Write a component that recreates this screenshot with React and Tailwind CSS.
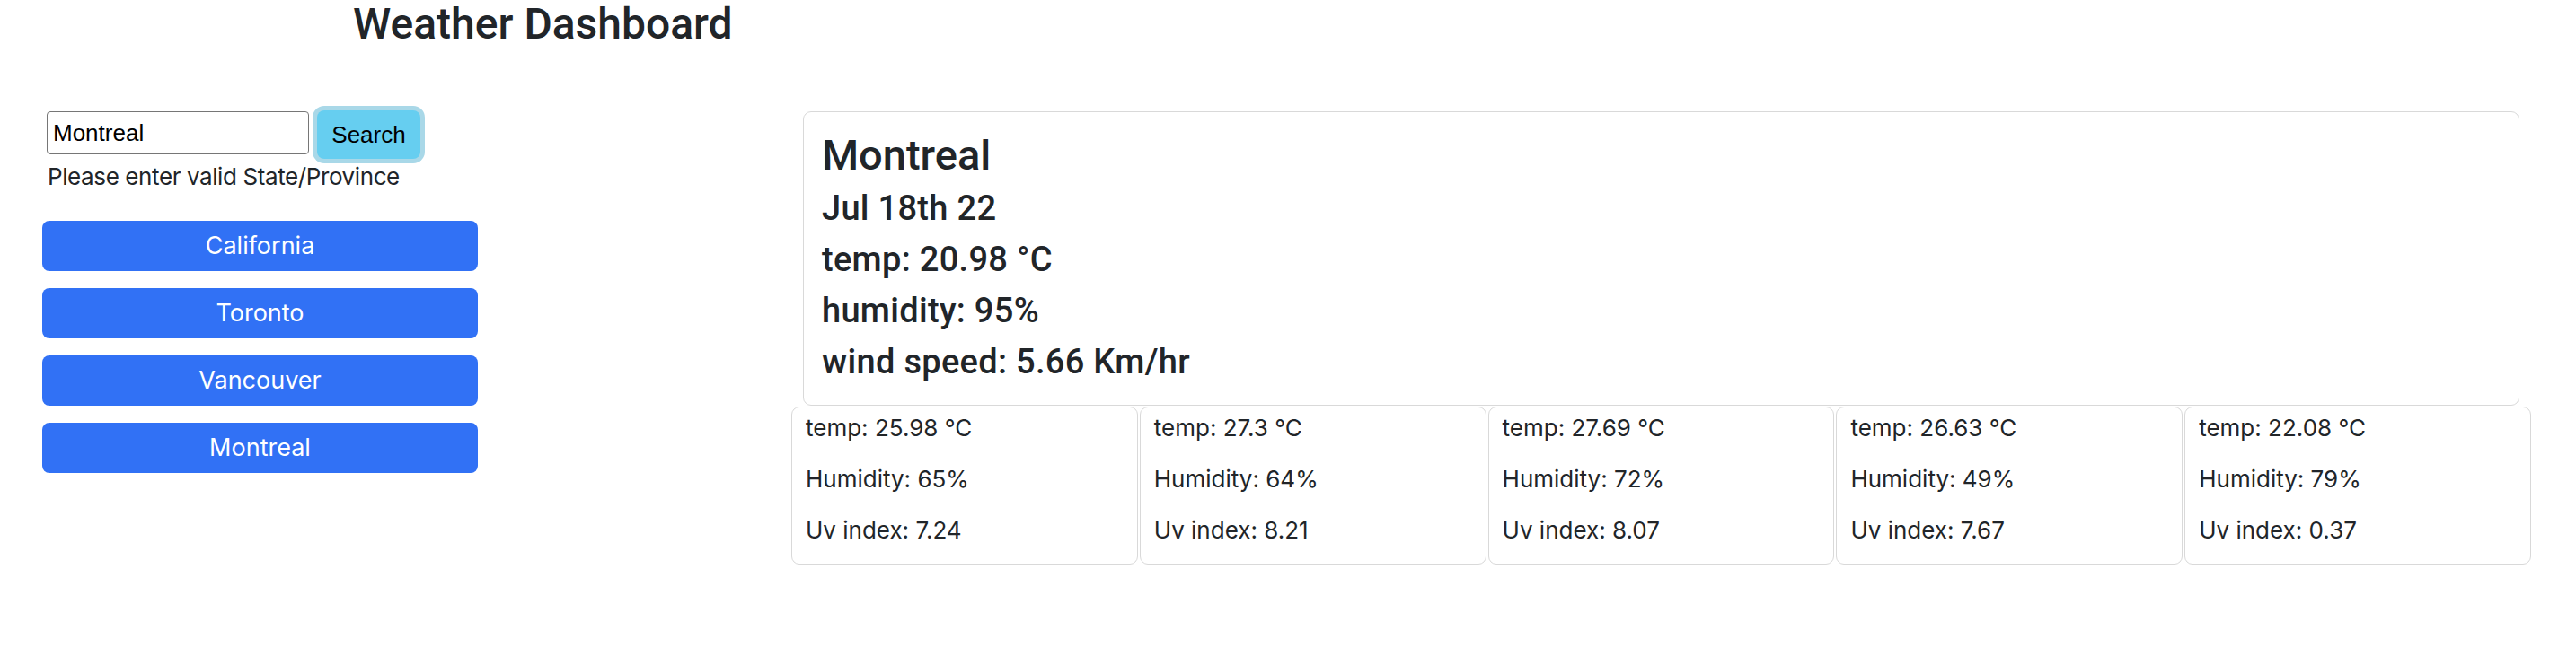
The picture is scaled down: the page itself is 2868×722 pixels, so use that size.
const cities = ["California", "Toronto", "Vancouver", "Montreal"];

const forecast = [
  { temp: "25.98", humidity: 65, uv: "7.24" },
  { temp: "27.3", humidity: 64, uv: "8.21" },
  { temp: "27.69", humidity: 72, uv: "8.07" },
  { temp: "26.63", humidity: 49, uv: "7.67" },
  { temp: "22.08", humidity: 79, uv: "0.37" },
];

export default function App() {
  return (
    <div className="min-h-[722px] bg-white font-['Inter',sans-serif] text-[#212529]">
      <h1 className="pl-[393px] text-[48px] leading-[54px] font-medium font-['Roboto',sans-serif]">
        Weather Dashboard
      </h1>

      <div className="flex">
        {/* Search + saved cities */}
        <aside className="w-[881px] shrink-0 pl-[47px]">
          <div className="flex items-start gap-[9px] pl-[5px] mt-[69px]">
            <input
              type="text"
              defaultValue="Montreal"
              className="mt-[1px] w-[292px] h-[48px] px-[6px] border border-[#767676] rounded-[4px] text-[26px] text-black font-['Liberation_Sans',sans-serif] outline-none"
            />
            <button className="w-[115px] h-[54px] rounded-[8px] bg-[#66cef0] shadow-[0_0_0_5px_#a9d8e8] text-[26px] text-black font-['Liberation_Sans',sans-serif]">
              Search
            </button>
          </div>
          <p className="pl-[6px] text-[26px] leading-[40px] tracking-[-0.4px]">
            Please enter valid State/Province
          </p>

          <div className="mt-[29px] flex flex-col gap-[19px] w-[485px]">
            {cities.map((city) => (
              <button
                key={city}
                className="h-[56px] rounded-[8px] bg-[#3171f5] text-white text-[27px]"
              >
                {city}
              </button>
            ))}
          </div>
        </aside>

        {/* Current weather + 5 day forecast */}
        <main className="w-[1937px] shrink-0 mt-[70px]">
          <div className="mx-[13px] border border-[#d9d9d9] rounded-[9px] pt-[21px] pb-[19px] pl-[20px] font-medium font-['Roboto',sans-serif]">
            <h2 className="text-[47px] leading-[54px] mb-[4px]">Montreal</h2>
            <h3 className="text-[38px] leading-[57px] tracking-[0.3px]">Jul 18th 22</h3>
            <h3 className="text-[38px] leading-[57px] tracking-[0.3px]">temp: 20.98 °C</h3>
            <h3 className="text-[38px] leading-[57px] tracking-[0.3px]">humidity: 95%</h3>
            <h3 className="text-[38px] leading-[57px] tracking-[0.3px]">wind speed: 5.66 Km/hr</h3>
          </div>

          <div className="grid grid-cols-5 gap-[2px] mt-[1px]">
            {forecast.map((day, i) => (
              <div
                key={i}
                className="h-[176px] border border-[#d9d9d9] rounded-[9px] pt-[3px] pl-[15px] text-[26px] leading-[39px]"
              >
                <p className="mb-[18px]">temp: {day.temp} °C</p>
                <p className="mb-[18px]">Humidity: {day.humidity}%</p>
                <p>Uv index: {day.uv}</p>
              </div>
            ))}
          </div>
        </main>
      </div>
    </div>
  );
}
